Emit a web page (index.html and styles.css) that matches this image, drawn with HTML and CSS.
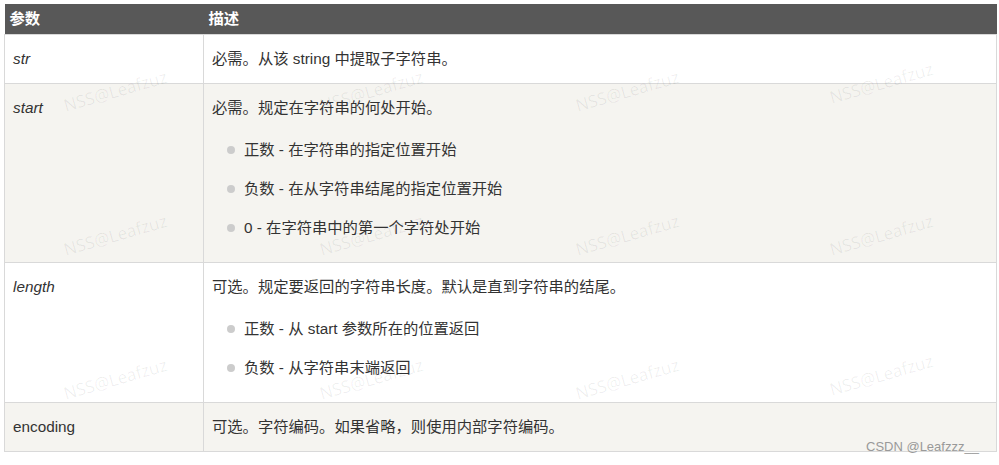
FILE: index.html
```html
<!DOCTYPE html>
<html lang="zh">
<head>
<meta charset="utf-8">
<link rel="stylesheet" href="styles.css">
</head>
<body>
<div class="page">
  <table class="ref">
    <thead>
      <tr><th class="c1">参数</th><th>描述</th></tr>
    </thead>
    <tbody>
      <tr>
        <td class="c1"><i>str</i></td>
        <td>必需。从该 string 中提取子字符串。</td>
      </tr>
      <tr class="alt">
        <td class="c1"><i>start</i></td>
        <td>
          <p>必需。规定在字符串的何处开始。</p>
          <ul>
            <li>正数 - 在字符串的指定位置开始</li>
            <li>负数 - 在从字符串结尾的指定位置开始</li>
            <li>0 - 在字符串中的第一个字符处开始</li>
          </ul>
        </td>
      </tr>
      <tr>
        <td class="c1"><i>length</i></td>
        <td>
          <p>可选。规定要返回的字符串长度。默认是直到字符串的结尾。</p>
          <ul>
            <li>正数 - 从 start 参数所在的位置返回</li>
            <li>负数 - 从字符串末端返回</li>
          </ul>
        </td>
      </tr>
      <tr class="alt">
        <td class="c1">encoding</td>
        <td>可选。字符编码。如果省略，则使用内部字符编码。</td>
      </tr>
    </tbody>
  </table>
  <div class="wm" style="left:64px;top:94px">NSS@Leafzuz</div>
  <div class="wm" style="left:320px;top:94px">NSS@Leafzuz</div>
  <div class="wm" style="left:576px;top:94px">NSS@Leafzuz</div>
  <div class="wm" style="left:830px;top:86px">NSS@Leafzuz</div>
  <div class="wm" style="left:64px;top:238px">NSS@Leafzuz</div>
  <div class="wm" style="left:320px;top:238px">NSS@Leafzuz</div>
  <div class="wm" style="left:576px;top:238px">NSS@Leafzuz</div>
  <div class="wm" style="left:830px;top:238px">NSS@Leafzuz</div>
  <div class="wm" style="left:64px;top:382px">NSS@Leafzuz</div>
  <div class="wm" style="left:320px;top:382px">NSS@Leafzuz</div>
  <div class="wm" style="left:576px;top:382px">NSS@Leafzuz</div>
  <div class="wm" style="left:830px;top:378px">NSS@Leafzuz</div>
  <div class="credit">CSDN @Leafzzz__</div>
</div>
</body>
</html>
```

FILE: styles.css
```css
html, body {
  margin: 0;
  padding: 0;
  background: #ffffff;
}

.page {
  position: relative;
  width: 999px;
  height: 465px;
  padding: 4px 2px 0 4px;
  box-sizing: border-box;
  font-family: "Liberation Sans", Arial, "Noto Sans CJK SC", sans-serif;
  font-size: 15.3px;
  color: #333333;
  overflow: hidden;
}

.ref {
  width: 993px;
  border-collapse: collapse;
  table-layout: fixed;
}

.ref th {
  box-sizing: border-box;
  background: #585858;
  color: #ffffff;
  font-weight: bold;
  text-align: left;
  padding: 0 5px;
  line-height: 30px;
  border: none;
}

.ref .c1 {
  width: 199px;
}

.ref td {
  vertical-align: top;
  padding: 14px 8px;
  line-height: 20px;
  border: 1px solid #d9d9d9;
  background: #ffffff;
}

.ref tr.alt td {
  background: #f5f4f0;
}

.ref i {
  font-style: italic;
}

.ref p {
  margin: 0;
}

.ref ul {
  margin: 22px 0 10px 0;
  padding: 0 0 0 15px;
  list-style: none;
}

.ref li {
  position: relative;
  padding-left: 17px;
}

.ref li + li {
  margin-top: 19px;
}

.ref li::before {
  content: "";
  position: absolute;
  left: 0;
  top: 6px;
  width: 8px;
  height: 8px;
  border-radius: 50%;
  background: #cccccc;
}

.wm {
  position: absolute;
  font-family: "Open Sans", "Liberation Sans", Arial, sans-serif;
  font-size: 17px;
  color: rgba(0, 0, 0, 0.065);
  transform: rotate(-16deg);
  transform-origin: left center;
  white-space: nowrap;
  pointer-events: none;
}

.credit {
  position: absolute;
  left: 866px;
  top: 439px;
  font-family: "Liberation Sans", Arial, sans-serif;
  font-size: 13px;
  color: #999999;
  white-space: nowrap;
}
```
